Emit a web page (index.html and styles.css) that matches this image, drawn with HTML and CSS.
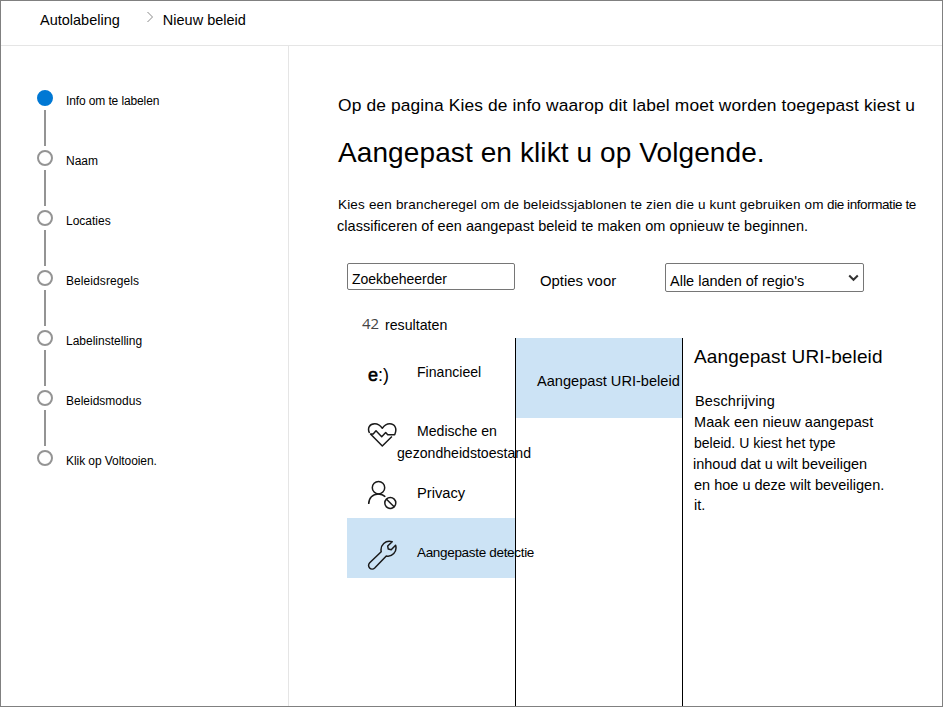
FILE: index.html
```html
<!DOCTYPE html>
<html lang="nl">
<head>
<meta charset="utf-8">
<title>Nieuw beleid</title>
<link rel="stylesheet" href="styles.css">
</head>
<body>
<div class="page">
  <header class="breadcrumb">
    <span>Autolabeling</span>
    <svg class="chevron" width="8" height="12" viewBox="0 0 8 12"><path d="M1.500 1 6.500 6 1.500 11"/></svg>
    <span>Nieuw beleid</span>
  </header>
  <div class="body">
    <nav class="steps">
      <div class="step active"><i class="dot"></i><span class="tight">Info om te labelen</span></div>
      <div class="step"><i class="dot"></i><span>Naam</span></div>
      <div class="step"><i class="dot"></i><span>Locaties</span></div>
      <div class="step"><i class="dot"></i><span class="loose">Beleidsregels</span></div>
      <div class="step"><i class="dot"></i><span>Labelinstelling</span></div>
      <div class="step"><i class="dot"></i><span>Beleidsmodus</span></div>
      <div class="step"><i class="dot"></i><span class="end">Klik op Voltooien.</span></div>
    </nav>
    <main class="content">
      <p class="lead">Op de pagina Kies de info waarop dit label moet worden toegepast kiest u</p>
      <h1>Aangepast en klikt u op Volgende.</h1>
      <p class="intro"><span class="intro-first">Kies een brancheregel om de beleidssjablonen te zien die u kunt gebruiken om<span class="squeeze"> die informatie te</span></span><span class="intro-second">classificeren of een aangepast beleid te maken om opnieuw te beginnen.</span></p>
      <div class="filters">
        <div class="search">Zoekbeheerder</div>
        <span class="options">Opties voor</span>
        <div class="select"><span>Alle landen of regio's</span><svg width="11" height="8" viewBox="0 0 11 8"><path d="M1.200 1.500 5.500 5.800 9.800 1.500"/></svg></div>
      </div>
      <p class="results"><span class="count">42</span><span>resultaten</span></p>
      <div class="columns">
        <div class="categories">
          <div class="category">
            <span class="glyph"><span class="strong">e</span>:)</span>
            <span class="name">Financieel</span>
          </div>
          <div class="category medical">
            <svg class="icon" viewBox="0 0 30 30"><path d="M2.500 13C.200 8.500 2.300 3.800 7.800 3.800c3.200 0 5.400 1.600 7.500 4.400 2-2.800 4.200-4.400 7.400-4.400 5.300 0 7.700 5 5 10.900h-7l-2-2.200-4 4.300-5.700-6L6.200 14H3.500L15.300 26l9.600-9.500"/></svg>
            <span class="name">Medische en<br><span class="outdent">gezondheidstoestand</span></span>
          </div>
          <div class="category privacy">
            <svg class="icon" viewBox="0 0 30 30"><circle cx="11.500" cy="7.700" r="6.200"/><path d="M1.700 24c0-6 4-10 9.600-10 2.700 0 5 .8 7 2.800"/><circle cx="23.300" cy="23" r="5.500"/><path d="m19.500 19.200 7.600 7.600"/></svg>
            <span class="name">Privacy</span>
          </div>
          <div class="category selected">
            <svg class="icon" viewBox="0 0 30 30"><path d="M14.200 11.700 2.700 22.800a3.500 3.500 0 0 0 5 5.200L19.300 16c5.700 1.200 11.200-4 9.300-10.800l-4.400 4.500-3-.7-.5-3L25.200 1.800C18.500-.3 13 5.200 14.200 11.700z"/></svg>
            <span class="name">Aangepaste detectie</span>
          </div>
        </div>
        <div class="policies"><div class="policy">Aangepast URI-beleid</div></div>
        <section class="detail">
          <h2>Aangepast URI-beleid</h2>
          <p><span class="d1">Beschrijving</span><span class="d2">Maak een nieuw aangepast</span><span class="d3">beleid. U kiest het type</span><span class="d4">inhoud dat u wilt beveiligen</span><span class="d5">en hoe u deze wilt beveiligen.</span><span class="d6">it.</span></p>
        </section>
      </div>
    </main>
  </div>
</div>
</body>
</html>
```
FILE: styles.css
```css
* { box-sizing: border-box; }
body { margin: 0; background: #fff; color: #000; font-family: "Liberation Sans", Arial, sans-serif; }
p, h1, h2 { margin: 0; font-weight: 400; white-space: nowrap; }
svg { fill: none; flex: none; }
.page { display: flex; flex-direction: column; width: 943px; height: 707px; border: 1px solid #808080; overflow: hidden; }

.breadcrumb { display: flex; height: 45px; flex: none; border-bottom: 1px solid #e5e5e5; padding: 8px 0 0 39px; font-size: 14.5px; line-height: 22px; }
.chevron { margin: 2px 9px 0 26px; stroke: #8a8a8a; stroke-width: 1; }
.body { display: flex; flex: 1; min-height: 0; }

.steps { width: 288px; flex: none; border-right: 1px solid #e5e5e5; padding: 44px 0 0 36px; }
.step { display: grid; grid-template-columns: 16px 1fr; column-gap: 13px; height: 60px; align-content: start; font-size: 12px; line-height: 22px; white-space: nowrap; }
.dot { width: 16px; height: 16px; border: 2px solid #949494; border-radius: 50%; }
.active .dot { background: #0078d4; border-color: #0078d4; }
.step:not(:last-child)::after { content: ""; width: 2px; height: 36px; margin: -2px 0 0 7px; background: #949494; }
.tight { letter-spacing: -0.12px; }
.loose { letter-spacing: 0.08px; }
.end { letter-spacing: -0.07px; }

.content { display: flex; flex-direction: column; flex: 1; padding: 48px 0 0 49px; }
.lead { font-size: 17.4px; line-height: 22px; letter-spacing: 0.12px; }
h1 { margin-top: 20px; font-size: 28px; line-height: 34px; letter-spacing: 0.1px; }
.intro { margin-top: 24px; line-height: 22px; }
.intro-first, .intro-second { display: block; }
.intro-first { font-size: 13.5px; letter-spacing: 0.18px; }
.squeeze { letter-spacing: -0.43px; }
.intro-second { margin: -1px 0 0 -1px; font-size: 14.5px; letter-spacing: 0.04px; }

.filters { display: flex; margin: 26px 0 0 9px; height: 29px; white-space: nowrap; line-height: 22px; }
.search { width: 168px; height: 27px; border: 1px solid #767676; border-radius: 2px; padding: 4px 4px 0; font-size: 14px; }
.options { width: 150px; margin-top: 7px; padding-left: 25px; font-size: 14.9px; }
.select { display: flex; justify-content: space-between; width: 199px; height: 29px; border: 1px solid #767676; border-radius: 2px; padding: 6px 4px 0; font-size: 14.5px; }
.select svg { margin-top: 4px; stroke: #333; stroke-width: 2; }
.results { display: flex; margin: 22px 0 0 24px; font-size: 14.2px; line-height: 22px; }
.count { width: 23px; font-family: "Open Sans", sans-serif; font-size: 15px; color: #444; margin: -2px 0 2px; }

.columns { display: flex; flex: 1; margin: 2px 0 0 9px; }
.categories { width: 168px; flex: none; }
.category { display: flex; gap: 20px; height: 60px; padding: 22px 0 0 20px; font-size: 14.1px; line-height: 22px; white-space: nowrap; }
.icon { width: 30px; height: 30px; stroke: #1a1a1a; stroke-width: 1.5; stroke-linejoin: round; }
.glyph { width: 30px; padding-left: 1px; font-size: 18px; line-height: 30px; }
.strong { -webkit-text-stroke: 0.6px #000; }
.name { padding-top: 1px; }
.medical .name { padding-top: 0; }
.outdent { margin-left: -20px; }
.privacy .name { padding-top: 2px; font-size: 14.7px; }
.selected { background: #cce3f5; }
.selected .name { padding-top: 2px; font-size: 13.5px; letter-spacing: -0.32px; }
.policies { width: 167px; flex: none; border-left: 1px solid #000; }
.policy { height: 80px; background: #cce3f5; padding: 32px 0 0 21px; font-size: 14.6px; line-height: 22px; white-space: nowrap; }
.detail { flex: 1; border-left: 1px solid #000; padding: 7px 0 0 11px; }
h2 { font-size: 19px; line-height: 24px; letter-spacing: 0.14px; }
.detail p { margin-top: 22px; font-size: 14.5px; line-height: 21px; }
.detail p span { display: block; }
.d1 { padding-left: 1px; letter-spacing: 0.15px; }
.d2 { letter-spacing: 0.08px; }
.d3 { font-size: 14px; }
.d4 { margin-left: -1px; }
.detail p .d6 { margin-top: -1px; }
```
